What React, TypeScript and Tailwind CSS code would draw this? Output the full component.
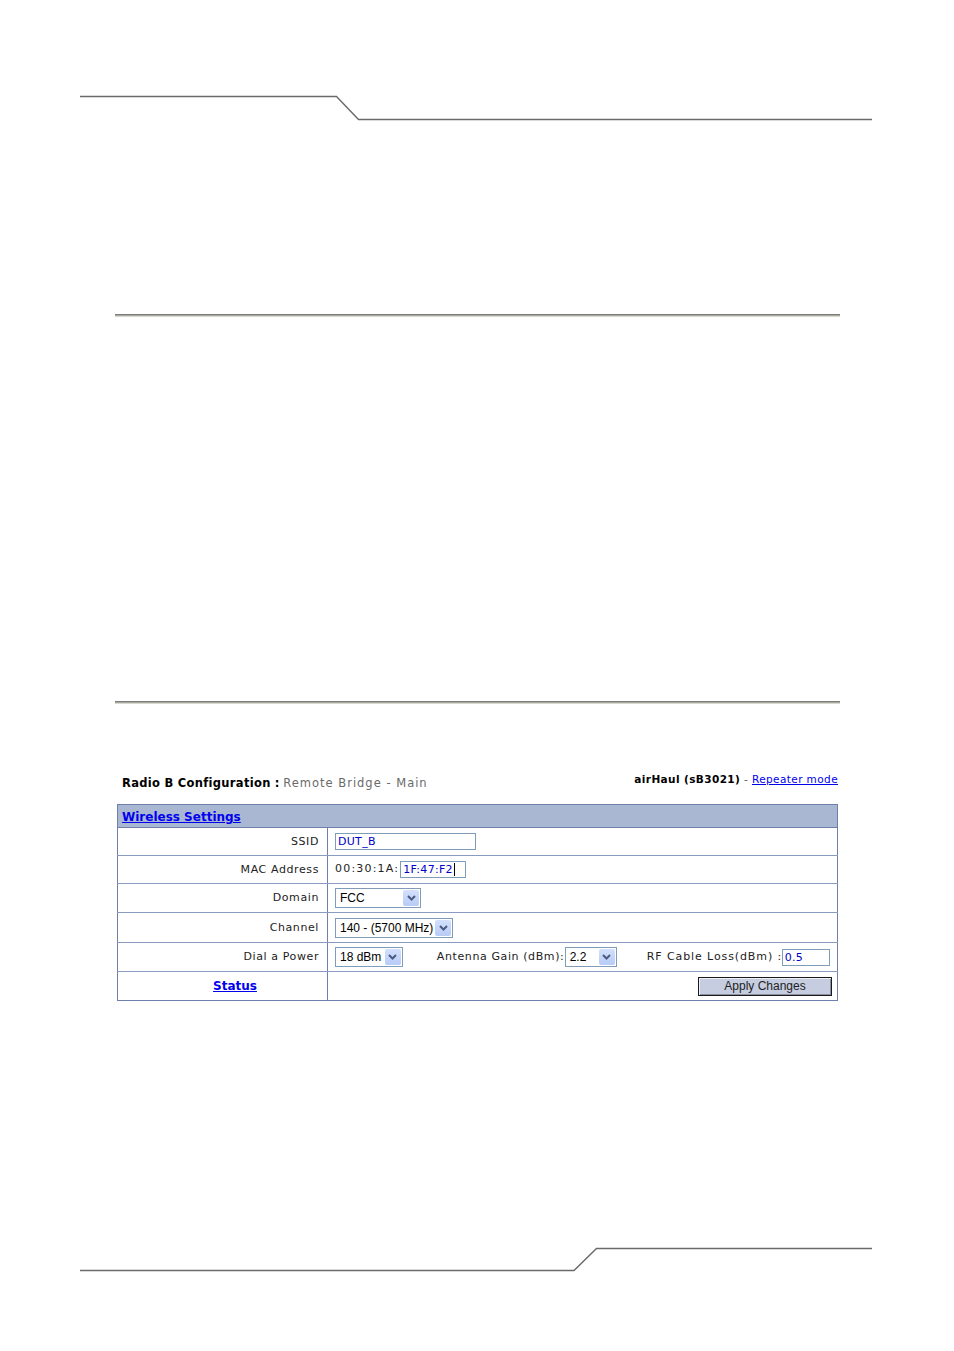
import React from "react";

const verdana = "font-['DejaVu_Sans',Verdana,sans-serif]";
const tahoma = "font-['Liberation_Sans',Tahoma,sans-serif]";

function Chevron() {
  return (
    <svg width="9" height="6" viewBox="0 0 9 6">
      <path d="M1 1 L4.5 4.5 L8 1" stroke="#4a5a80" strokeWidth="2" fill="none" />
    </svg>
  );
}

function Select({ value, width }: { value: string; width: string }) {
  return (
    <div className={`flex h-[20px] items-center border border-[#7f9db9] bg-white ${width}`}>
      <span className={`flex-1 pl-[4px] text-[12px] leading-none tracking-normal text-black ${tahoma}`}>{value}</span>
      <span className="m-[1px] flex h-[16px] w-[16px] items-center justify-center rounded-[2px] bg-gradient-to-b from-[#d4e0fc] to-[#b7cbf7]">
        <Chevron />
      </span>
    </div>
  );
}

function TextInput({ value, width, caret }: { value: string; width: string; caret?: boolean }) {
  return (
    <div className={`flex h-[17px] items-center border border-[#7f9db9] bg-white pl-[2px] ${width}`}>
      <span className={`text-[11px] leading-none tracking-[0.3px] text-[#0000c8] ${verdana}`}>{value}</span>
      {caret && <span className="ml-[1px] h-[13px] w-[1px] bg-black" />}
    </div>
  );
}

function Row({ label, h, children, last }: { label: React.ReactNode; h: string; children: React.ReactNode; last?: boolean }) {
  return (
    <tr className={h}>
      <td className={`border-r border-[#6e7fae] pr-[8px] pt-[1px] text-right ${last ? "" : "border-b border-b-[#8b9ac0]"}`}>
        {label}
      </td>
      <td className={`px-[7px] ${last ? "" : "border-b border-b-[#8b9ac0]"}`}>{children}</td>
    </tr>
  );
}

function Rule() {
  return (
    <div className="ml-[115px] w-[725px]">
      <div className="h-[1px] bg-[#7c7c78]" />
      <div className="h-[1px] bg-[#a9a9a0]" />
      <div className="h-[1px] bg-[#d8d8d0]" />
    </div>
  );
}

export default function App() {
  return (
    <div className={`h-[1351px] w-[954px] bg-white text-[#222] ${verdana}`}>
      <div className="pt-[95px]">
        <svg width="954" height="26" viewBox="0 0 954 26" className="block">
          <path d="M80 1.5 H336.5 L358.5 24.5 H872" stroke="#6a6a6a" strokeWidth="1.4" fill="none" />
        </svg>
      </div>

      <div className="mt-[193px]">
        <Rule />
      </div>
      <div className="mt-[384px]">
        <Rule />
      </div>

      <div className="ml-[117px] flex h-[100px] w-[721px] items-end justify-between">
        <div className="pb-[15px] pl-[5px] text-[11.5px] leading-none">
          <span className="font-bold tracking-[0.3px] text-black">Radio B Configuration</span>
          <span className="font-bold text-black"> : </span>
          <span className="tracking-[1px] text-[#6a6a6a]">Remote Bridge - Main</span>
        </div>
        <div className="pb-[20px] text-[10.5px] leading-none tracking-[0.4px]">
          <span className="font-bold text-black">airHaul (sB3021)</span>
          <span className="text-[#555]"> - </span>
          <a className="text-[#0000ee] underline">Repeater mode</a>
        </div>
      </div>

      <table className="ml-[117px] w-[721px] table-fixed border-collapse border border-[#6e7fae] text-[11px] tracking-[0.6px] text-[#222]">
        <colgroup>
          <col className="w-[210px]" />
          <col />
        </colgroup>
        <tbody>
          <tr className="h-[23px] bg-[#a9b7d2]">
            <td colSpan={2} className="border-b border-[#6e7fae] pl-[4px] pt-[2px] tracking-normal">
              <a className="text-[12px] font-bold text-[#0000ee] underline">Wireless Settings</a>
            </td>
          </tr>
          <Row label="SSID" h="h-[28px]">
            <TextInput value="DUT_B" width="w-[141px]" />
          </Row>
          <Row label="MAC Address" h="h-[28px]">
            <div className="flex items-center">
              <span className="mr-[1px] tracking-[1.2px]">00:30:1A:</span>
              <TextInput value="1F:47:F2" width="w-[66px]" caret />
            </div>
          </Row>
          <Row label="Domain" h="h-[29px]">
            <Select value="FCC" width="w-[86px]" />
          </Row>
          <Row label="Channel" h="h-[30px]">
            <Select value="140 - (5700 MHz)" width="w-[118px]" />
          </Row>
          <Row label="Dial a Power" h="h-[29px]">
            <div className="flex items-center whitespace-nowrap">
              <Select value="18 dBm" width="w-[69px]" />
              <span className="ml-[34px] w-[130px]">Antenna Gain (dBm):</span>
              <Select value="2.2" width="w-[53px]" />
              <span className="ml-[30px] w-[135px] tracking-[0.9px]">RF Cable Loss(dBm) :</span>
              <TextInput value="0.5" width="w-[49px]" />
            </div>
          </Row>
          <Row
            last
            h="h-[29px]"
            label={
              <div className="pl-[95px] text-left tracking-normal">
                <a className="text-[12px] font-bold text-[#0000ee] underline">Status</a>
              </div>
            }
          >
            <div className="flex justify-end">
              <button
                className={`mr-[-2px] h-[19px] w-[134px] border border-[#1a1a1a] bg-[#c6cde0] text-[12px] leading-none tracking-normal text-[#222] shadow-[inset_1px_1px_0_#eef0f6,inset_-1px_-1px_0_#8a90a0] ${tahoma}`}
              >
                Apply Changes
              </button>
            </div>
          </Row>
        </tbody>
      </table>

      <div className="mt-[246px]">
        <svg width="954" height="25" viewBox="0 0 954 25" className="block">
          <path d="M80 23.5 H574 L596.5 1.5 H872" stroke="#6a6a6a" strokeWidth="1.4" fill="none" />
        </svg>
      </div>
    </div>
  );
}
